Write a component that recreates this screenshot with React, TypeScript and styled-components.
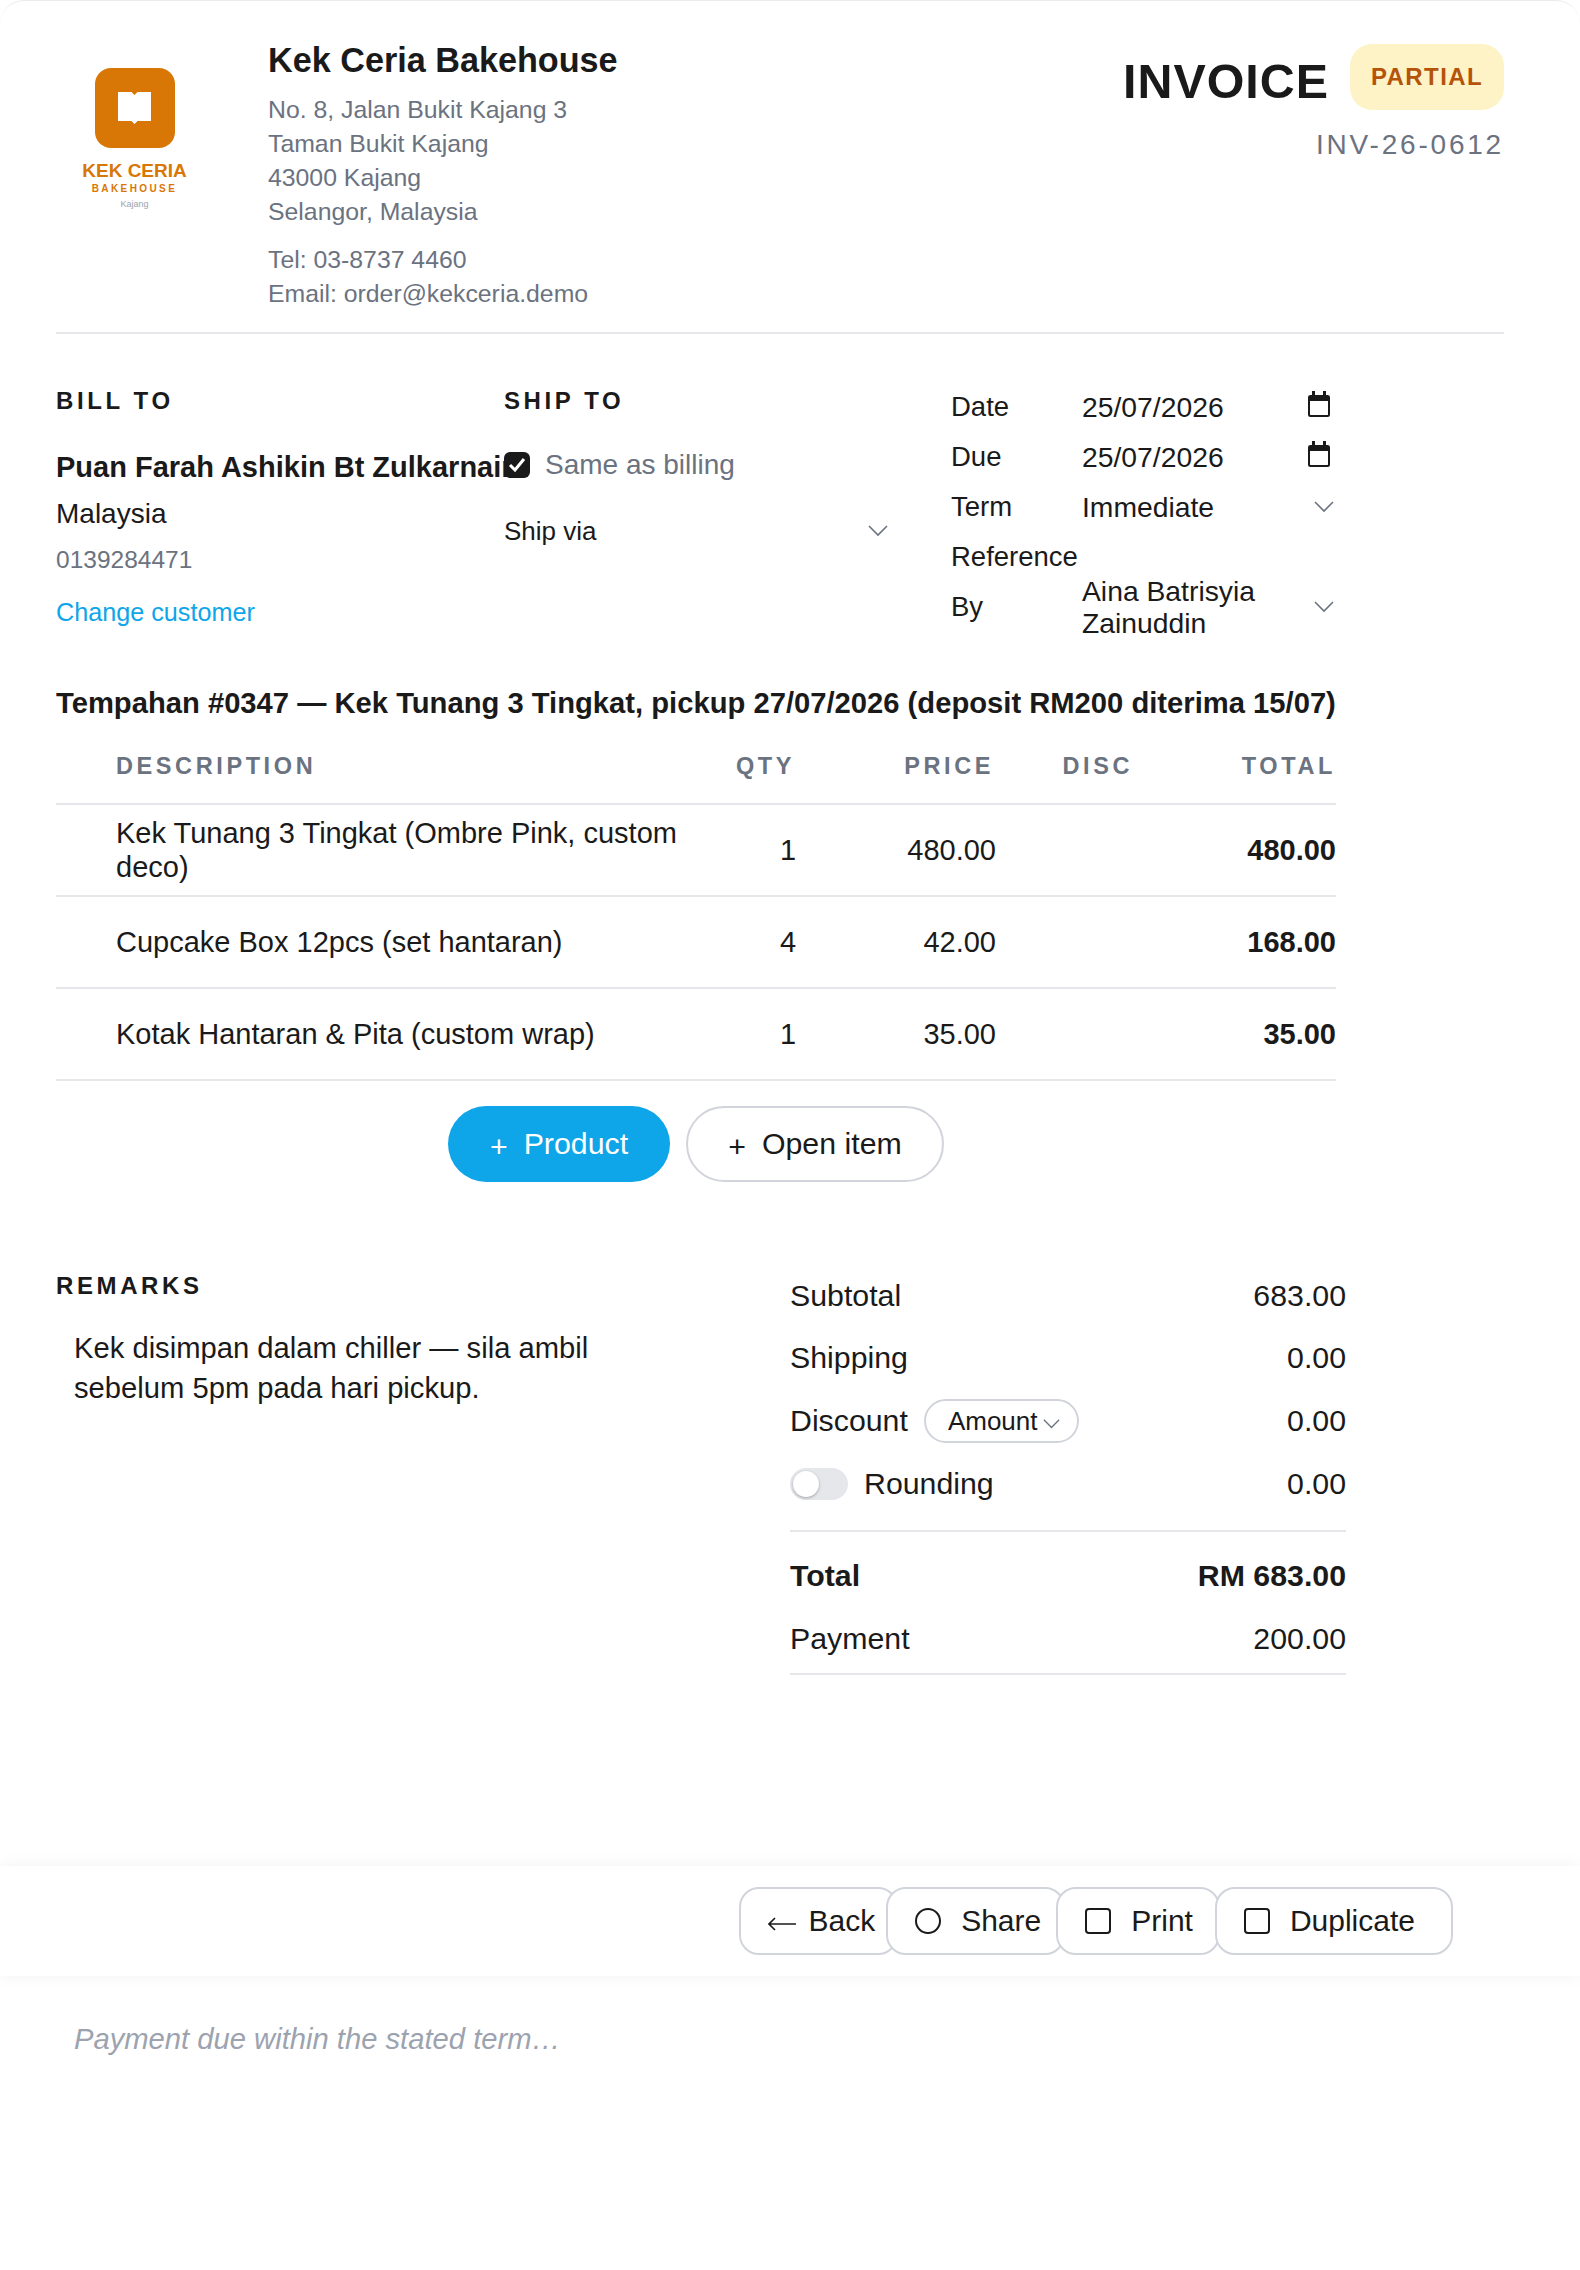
import React from 'react';
import styled, { createGlobalStyle } from 'styled-components';

const GlobalStyle = createGlobalStyle`
  html, body {
    margin: 0;
    padding: 0;
    background: #ffffff;
  }
  * {
    box-sizing: border-box;
  }
`;

const Page = styled.div`
  width: 1580px;
  height: 2270px;
  overflow: hidden;
  background: #ffffff;
  border-top: solid 1px #ececef;
  border-radius: 24px 24px 0 0;
  color: #1a1a1a;
  font-family: "Liberation Sans", Arial, sans-serif;
  font-size: 28px;
`;

const Sheet = styled.div`
  padding: 0 76px 0 56px;
  height: 1865px;
`;

const Header = styled.header`
  display: flex;
  height: 333px;
  border-bottom: solid 2px #e5e7eb;
`;

const LogoBox = styled.div`
  width: 157px;
  flex-shrink: 0;
  padding-top: 67px;
  display: flex;
  flex-direction: column;
  align-items: center;
`;

const LogoTile = styled.div`
  width: 80px;
  height: 80px;
  border-radius: 16px;
  background: #d97706;
  display: flex;
  align-items: center;
  justify-content: center;
`;

const LogoName = styled.div`
  margin-top: 12px;
  color: #d97706;
  font-size: 19px;
  line-height: 22px;
  font-weight: bold;
  white-space: nowrap;
`;

const LogoSub = styled.div`
  margin-top: 1px;
  color: #d97706;
  font-size: 10px;
  line-height: 12px;
  font-weight: bold;
  letter-spacing: 2.4px;
  white-space: nowrap;
`;

const LogoPlace = styled.div`
  margin-top: 3px;
  color: #9ca3af;
  font-size: 9px;
  line-height: 12px;
`;

const Company = styled.div`
  flex: 1;
  padding: 37px 0 0 55px;
`;

const CompanyName = styled.div`
  font-size: 34.2px;
  line-height: 44px;
  font-weight: bold;
  margin-bottom: 11px;
`;

const CompanyLine = styled.div<{ $gap?: boolean }>`
  color: #6b7280;
  font-size: 24.8px;
  line-height: 34px;
  margin-top: ${(p) => (p.$gap ? '14px' : '0')};
`;

const HeaderRight = styled.div`
  display: flex;
  flex-direction: column;
  align-items: flex-end;
  padding-top: 43px;
`;

const TitleRow = styled.div`
  display: flex;
  align-items: center;
  gap: 21px;
`;

const Title = styled.h1`
  margin: 8px 0 0;
  font-size: 48.4px;
  line-height: 58px;
  font-weight: bold;
  letter-spacing: 1px;
`;

const Badge = styled.span`
  height: 66px;
  padding: 0 21px;
  border-radius: 22px;
  background: #fef3c7;
  color: #b45309;
  font-size: 24px;
  font-weight: bold;
  letter-spacing: 1.4px;
  display: flex;
  align-items: center;
`;

const InvoiceNo = styled.div`
  margin-top: 17px;
  color: #6b7280;
  font-size: 28px;
  line-height: 36px;
  letter-spacing: 2.8px;
`;

const Parties = styled.section`
  display: grid;
  grid-template-columns: 448px 447px 1fr;
  height: 350px;
  padding-top: 54px;
`;

const SectionLabel = styled.div`
  font-size: 24px;
  line-height: 26px;
  font-weight: bold;
  letter-spacing: 3.6px;
`;

const CustomerName = styled.div`
  margin-top: 33px;
  font-size: 29px;
  line-height: 40px;
  font-weight: bold;
  white-space: nowrap;
`;

const CustomerCountry = styled.div`
  margin-top: 7px;
  font-size: 28px;
  line-height: 40px;
`;

const CustomerPhone = styled.div`
  margin-top: 10px;
  color: #6b7280;
  font-size: 24.5px;
  line-height: 32px;
`;

const ChangeLink = styled.a`
  display: block;
  margin-top: 20px;
  color: #0ea5e9;
  font-size: 25.2px;
  line-height: 32px;
`;

const ShipColumn = styled.div`
  position: relative;
  padding-right: 63px;
`;

const SameBilling = styled.label`
  margin-top: 31px;
  display: flex;
  align-items: center;
  gap: 15px;
  color: #6b7280;
  font-size: 28px;
  line-height: 40px;
`;

const CheckBox = styled.span`
  width: 26px;
  height: 26px;
  border-radius: 6px;
  background: #1a1a1a;
  display: flex;
  align-items: center;
  justify-content: center;
`;

const ShipVia = styled.div`
  margin-top: 26px;
  display: flex;
  align-items: center;
  justify-content: space-between;
  font-size: 26px;
  line-height: 40px;
`;

const MetaColumn = styled.div`
  margin-top: -6px;
  padding-right: 170px;
`;

const MetaRow = styled.div`
  display: grid;
  grid-template-columns: 131px 1fr 30px;
  grid-template-rows: 50px;
  align-items: center;
  height: 50px;
  font-size: 27.5px;
  line-height: 32px;
`;

const MetaValue = styled.span`
  font-size: 28.3px;
`;

const MetaIcon = styled.span<{ $calendar?: boolean }>`
  display: flex;
  justify-content: flex-end;
  margin-top: ${(p) => (p.$calendar ? '-6px' : '0')};
  margin-right: ${(p) => (p.$calendar ? '4px' : '0')};
`;

const OrderLine = styled.div`
  font-size: 29.2px;
  line-height: 38px;
  font-weight: bold;
  white-space: nowrap;
  height: 38px;
`;

const Table = styled.div`
  width: 1280px;
  margin-top: 8px;
`;

const TableRow = styled.div<{ $head?: boolean }>`
  display: grid;
  grid-template-columns: 60px 640px 64px 176px 140px 200px;
  align-items: center;
  height: ${(p) => (p.$head ? '75px' : '92px')};
  border-bottom: solid 2px #e5e7eb;
`;

const HeadCell = styled.div<{ $end?: number; $column?: number }>`
  grid-column: ${(p) => p.$column ?? 'auto'};
  justify-self: ${(p) => (p.$end !== undefined ? 'end' : 'start')};
  margin-right: ${(p) => p.$end ?? 0}px;
  color: #6b7280;
  font-size: 23.5px;
  font-weight: bold;
  letter-spacing: 3.6px;
  white-space: nowrap;
`;

const DescCell = styled.div`
  grid-column: 2;
  font-size: 29px;
  line-height: 34px;
  padding-right: 50px;
`;

const QtyCell = styled.div`
  text-align: center;
  font-size: 29px;
`;

const PriceCell = styled.div`
  text-align: right;
  font-size: 29px;
`;

const TotalCell = styled.div`
  grid-column: 6;
  text-align: right;
  font-size: 29px;
  font-weight: bold;
`;

const AddRow = styled.div`
  width: 1280px;
  margin-top: 25px;
  padding-left: 392px;
  display: flex;
  gap: 16px;
`;

const AddButton = styled.button<{ $primary?: boolean }>`
  height: 76px;
  width: ${(p) => (p.$primary ? '222px' : '258px')};
  padding: 0;
  justify-content: center;
  border-radius: 38px;
  border: ${(p) => (p.$primary ? 'none' : 'solid 2px #d1d5db')};
  background: ${(p) => (p.$primary ? '#0ea5e9' : '#ffffff')};
  color: ${(p) => (p.$primary ? '#ffffff' : '#1a1a1a')};
  font-family: inherit;
  font-size: 30.3px;
  display: flex;
  align-items: center;
  gap: 16px;
`;

const Plus = styled.span`
  margin-top: 5px;
`;

const Bottom = styled.section`
  margin-top: 91px;
  display: flex;
`;

const Remarks = styled.div`
  width: 734px;
`;

const RemarksText = styled.p`
  margin: 29px 0 0 18px;
  font-size: 29.2px;
  line-height: 40px;
  width: 560px;
`;

const Summary = styled.div`
  width: 556px;
  margin-top: -8px;
`;

const SummaryRow = styled.div<{ $strong?: boolean; $tall?: boolean }>`
  display: flex;
  align-items: center;
  justify-content: space-between;
  height: ${(p) => (p.$tall ? '64px' : '62px')};
  font-size: 30.3px;
  font-weight: ${(p) => (p.$strong ? 'bold' : 'normal')};
`;

const SummaryDivider = styled.div<{ $top: number; $bottom: number }>`
  height: 2px;
  background: #e5e7eb;
  margin: ${(p) => p.$top}px 0 ${(p) => p.$bottom}px;
`;

const SummaryLabel = styled.span`
  display: flex;
  align-items: center;
  gap: 16px;
`;

const AmountPill = styled.span`
  height: 44px;
  padding: 0 17px 0 22px;
  border: solid 2px #d1d5db;
  border-radius: 22px;
  font-size: 26px;
  display: flex;
  align-items: center;
  gap: 6px;
`;

const PillChevron = styled.span`
  display: flex;
  margin-top: 7px;
`;

const Toggle = styled.span`
  position: relative;
  width: 58px;
  height: 32px;
  border-radius: 16px;
  background: #e5e7eb;
`;

const ToggleKnob = styled.span`
  position: absolute;
  left: 3px;
  top: 3px;
  width: 26px;
  height: 26px;
  border-radius: 50%;
  background: #ffffff;
  box-shadow: 0 1px 3px rgba(0,0,0,0.3);
`;

const ActionBar = styled.div`
  height: 110px;
  background: #ffffff;
  box-shadow: 0 0 16px rgba(0,0,0,0.06);
  display: flex;
  align-items: center;
  justify-content: flex-end;
  padding-right: 127px;
`;

const ActionButton = styled.button<{ $overlap?: number; $tail?: number }>`
  height: 68px;
  margin-left: -${(p) => p.$overlap ?? 0}px;
  padding: 0 ${(p) => p.$tail ?? 25}px 0 27px;
  border: solid 2px #d1d5db;
  border-radius: 20px;
  background: #ffffff;
  color: #1a1a1a;
  font-family: inherit;
  font-size: 30px;
  display: flex;
  align-items: center;
  gap: 20px;
  white-space: nowrap;
`;

const BackButton = styled(ActionButton)`
  gap: 12px;
`;

const Note = styled.div`
  padding: 43px 74px;
  color: #9ca3af;
  font-size: 29.2px;
  line-height: 40px;
  font-style: italic;
`;

const Chevron = ({ size = 20 }: { size?: number }) => (
  <svg width={size} height={size * 0.6} viewBox="0 0 20 12" fill="none" stroke="#6b7280" strokeWidth="1.6">
    <path d="M1 1l9 9 9-9" />
  </svg>
);

const CalendarIcon = () => (
  <svg width="22" height="26" viewBox="0 0 22 26">
    <path d="M4 0h3v4h8V0h3v4h1.500A2.500 2.500 0 0 1 22 6.500V23.500A2.500 2.500 0 0 1 19.500 26H2.500A2.500 2.500 0 0 1 0 23.500V6.500A2.500 2.500 0 0 1 2.500 4H4z M2 10v13.500c0 .3.2.500.500.500h17c.3 0 .500-.2.500-.500V10z" fill="#1a1a1a" fillRule="evenodd" />
  </svg>
);

const ActionShape = ({ round }: { round?: boolean }) => (
  <svg width="26" height="26" viewBox="0 0 26 26" fill="none" stroke="#1a1a1a" strokeWidth="2">
    {round ? <circle cx="13" cy="13" r="12" /> : <rect x="1" y="1" width="24" height="24" rx="3" />}
  </svg>
);

const BackArrow = () => (
  <svg width="28" height="14" viewBox="0 0 28 14" fill="none" stroke="#1a1a1a" strokeWidth="1.6" style={{ marginTop: 6 }}>
    <path d="M1 7h27M7 1L1 7l6 6" />
  </svg>
);

const metaRows = [
  { label: 'Date', value: '25/07/2026', icon: 'cal' },
  { label: 'Due', value: '25/07/2026', icon: 'cal' },
  { label: 'Term', value: 'Immediate', icon: 'chev' },
  { label: 'Reference', value: '', icon: '' },
  { label: 'By', value: 'Aina Batrisyia Zainuddin', icon: 'chev' },
];

const items = [
  { desc: 'Kek Tunang 3 Tingkat (Ombre Pink, custom deco)', qty: 1, price: '480.00', total: '480.00' },
  { desc: 'Cupcake Box 12pcs (set hantaran)', qty: 4, price: '42.00', total: '168.00' },
  { desc: 'Kotak Hantaran & Pita (custom wrap)', qty: 1, price: '35.00', total: '35.00' },
];

const App = () => (
  <Page>
    <GlobalStyle />
    <Sheet>
      <Header>
        <LogoBox>
          <LogoTile>
            <svg width="33" height="32" viewBox="0 0 33 32">
              <path d="M0 0h13.500l3 3 3-3H33v29H19.500l-3 3-3-3H0z" fill="#ffffff" />
            </svg>
          </LogoTile>
          <LogoName>KEK CERIA</LogoName>
          <LogoSub>BAKEHOUSE</LogoSub>
          <LogoPlace>Kajang</LogoPlace>
        </LogoBox>
        <Company>
          <CompanyName>Kek Ceria Bakehouse</CompanyName>
          <CompanyLine>No. 8, Jalan Bukit Kajang 3</CompanyLine>
          <CompanyLine>Taman Bukit Kajang</CompanyLine>
          <CompanyLine>43000 Kajang</CompanyLine>
          <CompanyLine>Selangor, Malaysia</CompanyLine>
          <CompanyLine $gap>Tel: 03-8737 4460</CompanyLine>
          <CompanyLine>Email: order@kekceria.demo</CompanyLine>
        </Company>
        <HeaderRight>
          <TitleRow>
            <Title>INVOICE</Title>
            <Badge>PARTIAL</Badge>
          </TitleRow>
          <InvoiceNo>INV-26-0612</InvoiceNo>
        </HeaderRight>
      </Header>

      <Parties>
        <div>
          <SectionLabel>BILL TO</SectionLabel>
          <CustomerName>Puan Farah Ashikin Bt Zulkarnain</CustomerName>
          <CustomerCountry>Malaysia</CustomerCountry>
          <CustomerPhone>0139284471</CustomerPhone>
          <ChangeLink>Change customer</ChangeLink>
        </div>
        <ShipColumn>
          <SectionLabel>SHIP TO</SectionLabel>
          <SameBilling>
            <CheckBox>
              <svg width="18" height="16" viewBox="0 0 18 16" fill="none" stroke="#ffffff" strokeWidth="3">
                <path d="M2 8l5 5 9-11" />
              </svg>
            </CheckBox>
            Same as billing
          </SameBilling>
          <ShipVia>
            Ship via
            <Chevron />
          </ShipVia>
        </ShipColumn>
        <div>
          <MetaColumn>
            {metaRows.map((row) => (
              <MetaRow key={row.label}>
                <span>{row.label}</span>
                <MetaValue>{row.value}</MetaValue>
                <MetaIcon $calendar={row.icon === 'cal'}>
                  {row.icon === 'cal' && <CalendarIcon />}
                  {row.icon === 'chev' && <Chevron />}
                </MetaIcon>
              </MetaRow>
            ))}
          </MetaColumn>
        </div>
      </Parties>

      <OrderLine>Tempahan #0347 — Kek Tunang 3 Tingkat, pickup 27/07/2026 (deposit RM200 diterima 15/07)</OrderLine>

      <Table>
        <TableRow $head>
          <HeadCell $column={2}>DESCRIPTION</HeadCell>
          <HeadCell $end={25}>QTY</HeadCell>
          <HeadCell $end={2}>PRICE</HeadCell>
          <HeadCell $end={3}>DISC</HeadCell>
          <HeadCell $end={0}>TOTAL</HeadCell>
        </TableRow>
        {items.map((item) => (
          <TableRow key={item.desc}>
            <DescCell>{item.desc}</DescCell>
            <QtyCell>{item.qty}</QtyCell>
            <PriceCell>{item.price}</PriceCell>
            <TotalCell>{item.total}</TotalCell>
          </TableRow>
        ))}
      </Table>

      <AddRow>
        <AddButton $primary><Plus>+</Plus>Product</AddButton>
        <AddButton><Plus>+</Plus>Open item</AddButton>
      </AddRow>

      <Bottom>
        <Remarks>
          <SectionLabel>REMARKS</SectionLabel>
          <RemarksText>Kek disimpan dalam chiller — sila ambil sebelum 5pm pada hari pickup.</RemarksText>
        </Remarks>
        <Summary>
          <SummaryRow><span>Subtotal</span><span>683.00</span></SummaryRow>
          <SummaryRow><span>Shipping</span><span>0.00</span></SummaryRow>
          <SummaryRow $tall>
            <SummaryLabel>Discount<AmountPill>Amount<PillChevron><Chevron size={17} /></PillChevron></AmountPill></SummaryLabel>
            <span>0.00</span>
          </SummaryRow>
          <SummaryRow>
            <SummaryLabel><Toggle><ToggleKnob /></Toggle>Rounding</SummaryLabel>
            <span>0.00</span>
          </SummaryRow>
          <SummaryDivider $top={15} $bottom={12} />
          <SummaryRow $strong $tall><span>Total</span><span>RM 683.00</span></SummaryRow>
          <SummaryRow><span>Payment</span><span>200.00</span></SummaryRow>
          <SummaryDivider $top={3} $bottom={0} />
        </Summary>
      </Bottom>
    </Sheet>

    <ActionBar>
      <BackButton $tail={21}><BackArrow />Back</BackButton>
      <ActionButton $overlap={12} $tail={22}><ActionShape round />Share</ActionButton>
      <ActionButton $overlap={9}><ActionShape />Print</ActionButton>
      <ActionButton $overlap={5} $tail={36}><ActionShape />Duplicate</ActionButton>
    </ActionBar>

    <Note>Payment due within the stated term…</Note>
  </Page>
);

export default App;
